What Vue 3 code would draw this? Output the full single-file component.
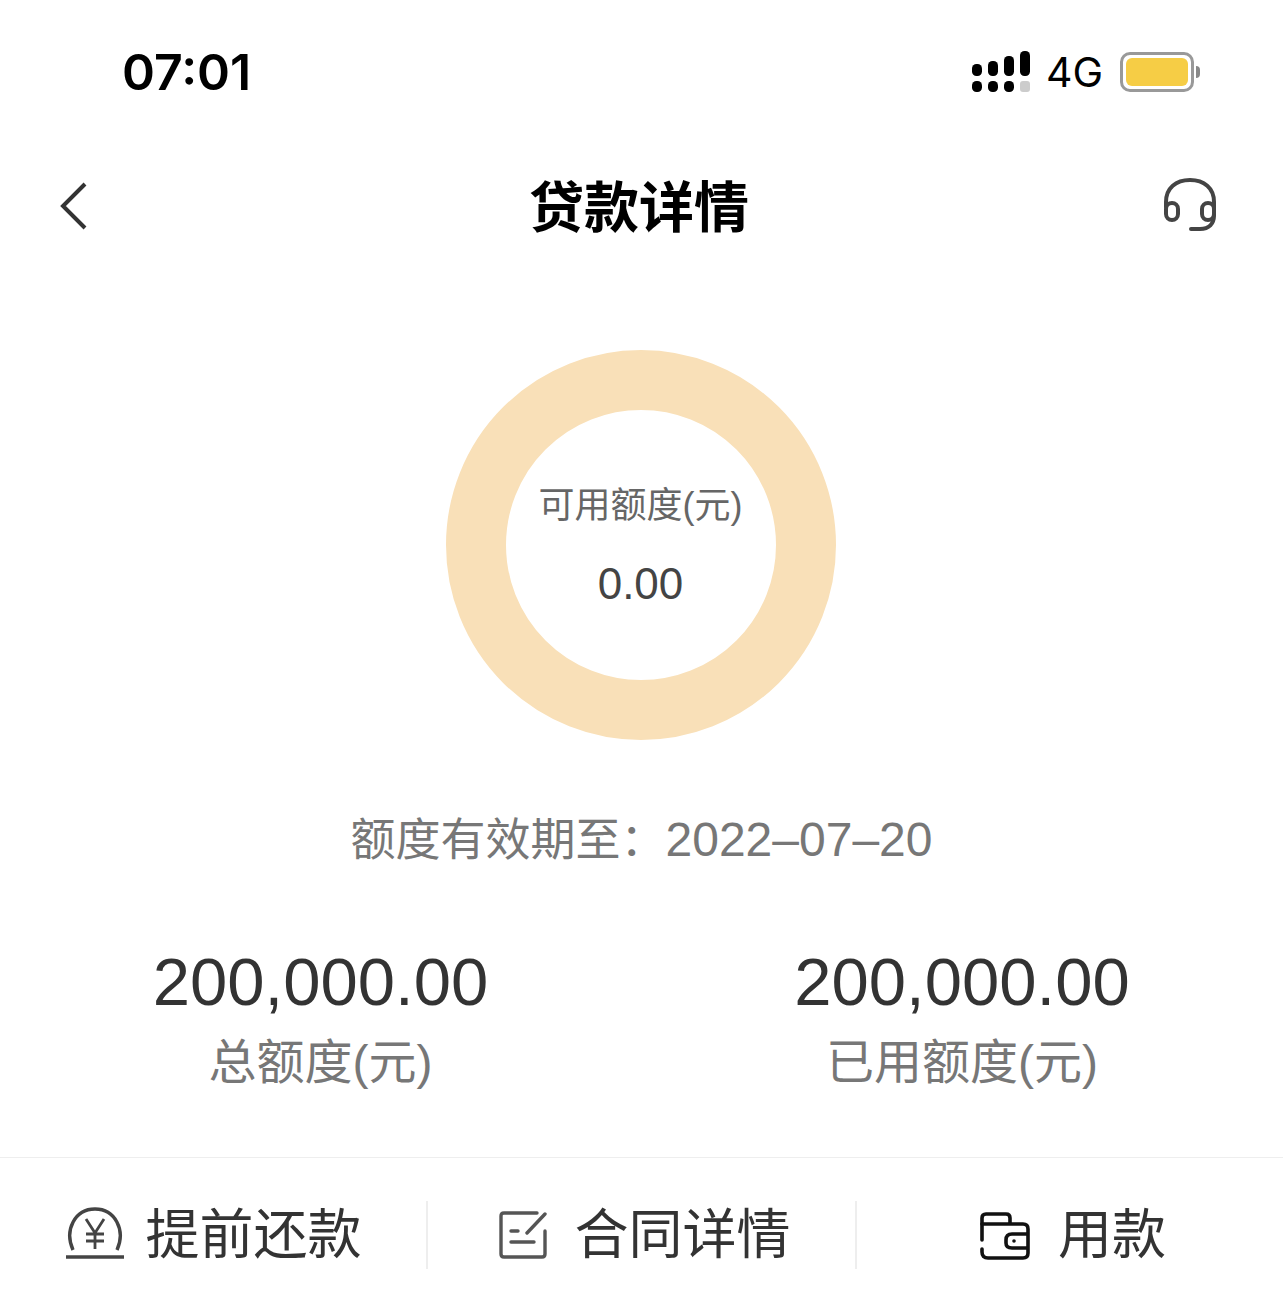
<script setup>
const stats = [
  { value: "200,000.00", label: "总额度(元)" },
  { value: "200,000.00", label: "已用额度(元)" },
];
</script>

<template>
  <div class="page">
    <div class="status-bar">
      <span class="time">07:01</span>
      <div class="status-right">
        <svg class="signal" width="60" height="42" viewBox="0 0 60 42">
          <rect x="0" y="13" width="10" height="12" rx="4.5" fill="#000" />
          <rect x="16" y="10" width="10" height="15" rx="4.5" fill="#000" />
          <rect x="32" y="5" width="10" height="20" rx="4.5" fill="#000" />
          <rect x="48" y="0" width="10" height="25" rx="4.5" fill="#000" />
          <rect x="0" y="30" width="10" height="11" rx="4.5" fill="#000" />
          <rect x="16" y="30" width="10" height="11" rx="4.5" fill="#000" />
          <rect x="32" y="30" width="10" height="11" rx="4.5" fill="#000" />
          <rect x="48" y="30" width="10" height="11" rx="3" fill="#ccc" />
        </svg>
        <span class="net">4G</span>
        <div class="battery"><div class="battery-fill"></div></div>
        <div class="battery-tip"></div>
      </div>
    </div>

    <div class="nav-bar">
      <svg class="nav-back" width="32" height="50" viewBox="0 0 32 50" fill="none" stroke="#333" stroke-width="4">
        <path d="M28 3 L6 25 L28 47" />
      </svg>
      <span class="title">贷款详情</span>
      <svg class="nav-help" width="56" height="56" viewBox="0 0 56 56" fill="none" stroke="#444" stroke-width="4" stroke-linecap="round">
        <path d="M4 30 V25 C4 11 14 3 28 3 C42 3 52 11 52 25 V38 C52 47 47 52 38 52 H29" />
        <rect x="4" y="26" width="12" height="17" rx="6" />
        <rect x="40" y="26" width="12" height="17" rx="6" />
      </svg>
    </div>

    <div class="ring-wrap">
      <div class="ring">
        <span class="ring-label">可用额度(元)</span>
        <span class="ring-value">0.00</span>
      </div>
    </div>

    <div class="expire">额度有效期至：<span class="expire-date">2022–07–20</span></div>

    <div class="stats">
      <div v-for="s in stats" :key="s.label" class="stat">
        <span class="stat-value">{{ s.value }}</span>
        <span class="stat-label">{{ s.label }}</span>
      </div>
    </div>

    <div class="actions">
      <div class="action first">
        <svg width="60" height="54" viewBox="0 0 60 54" fill="none" stroke="#444" stroke-width="3.4">
          <path d="M8 44 C-1 24 10 3 30 3 C50 3 61 24 52 44" />
          <path d="M1 51 H59" />
          <path d="M21 13 L30 27 L39 13 M30 27 V43 M21 28 H39 M21 35 H39" stroke-width="2.8" />
        </svg>
        <span>提前还款</span>
      </div>
      <div class="action second">
        <svg width="48" height="48" viewBox="0 0 48 48" fill="none" stroke="#555" stroke-width="3.4" stroke-linecap="round">
          <path d="M38 2 H5 Q2 2 2 5 V43 Q2 46 5 46 H43 Q46 46 46 43 V20" />
          <path d="M46 3 L28 22" />
          <path d="M12 20 H19 M12 31 H35" />
        </svg>
        <span>合同详情</span>
      </div>
      <div class="action third">
        <svg width="50" height="48" viewBox="0 0 50 48" fill="none" stroke="#111" stroke-width="3.6" stroke-linecap="round">
          <path d="M2 28 V6 Q2 2 6 2 H26 Q30 2 30 6 V11" />
          <path d="M2 12 H43 Q48 12 48 17 V41 Q48 46 43 46 H8 Q2 46 2 40 V37" />
          <path d="M47 22 H32 Q26 22 26 28 V31 Q26 36 32 36 H47" />
          <circle cx="34" cy="29" r="1.8" fill="#111" stroke="none" />
        </svg>
        <span>用款</span>
      </div>
    </div>
  </div>
</template>

<style>
body {
  background: #fff;
}
</style>

<style scoped>
.page {
  width: 1283px;
  height: 1303px;
  overflow: hidden;
  background: #fff;
  font-family: "Liberation Sans", "Noto Sans CJK SC", sans-serif;
  display: flex;
  flex-direction: column;
}

.status-bar {
  height: 143px;
  display: flex;
  justify-content: space-between;
  align-items: center;
  padding: 0 83px 0 122px;
}

.time {
  font-family: Inter, sans-serif;
  font-size: 50px;
  font-weight: 600;
  color: #000;
}

.status-right {
  display: flex;
  align-items: center;
}

.signal {
  margin-right: 14px;
}

.net {
  font-family: Inter, sans-serif;
  font-size: 41px;
  color: #000;
  margin-right: 17px;
}

.battery {
  width: 74px;
  height: 40px;
  border: 3px solid #999;
  border-radius: 10px;
  padding: 3px;
  box-sizing: border-box;
}

.battery-fill {
  height: 100%;
  background: #f6cd45;
  border-radius: 6px;
}

.battery-tip {
  width: 4px;
  height: 12px;
  margin-left: 2px;
  background: #888;
  border-radius: 0 4px 4px 0;
}

.nav-bar {
  height: 124px;
  display: grid;
  grid-template-columns: 1fr auto 1fr;
  align-items: center;
  padding: 0 65px 0 57px;
}

.nav-back {
  justify-self: start;
  margin-top: 2px;
}

.nav-help {
  justify-self: end;
}

.title {
  font-size: 55px;
  font-weight: 700;
  color: #000;
  line-height: 1;
  margin-left: 3px;
  margin-top: 6px;
}

.ring-wrap {
  display: flex;
  justify-content: center;
  padding: 83px 2px 0 0;
}

.ring {
  width: 390px;
  height: 390px;
  box-sizing: border-box;
  border: 60px solid #f9e0b8;
  border-radius: 50%;
  display: flex;
  flex-direction: column;
  align-items: center;
  justify-content: center;
}

.ring-label {
  font-size: 36px;
  color: #666;
  white-space: nowrap;
  margin-top: -5px;
}

.ring-value {
  font-size: 44px;
  color: #444;
  margin-top: 31px;
}

.expire {
  margin-top: 76px;
  text-align: center;
  font-size: 45px;
  line-height: 48px;
  color: #777;
}

.expire-date {
  font-size: 48px;
}

.stats {
  margin-top: 78px;
  display: grid;
  grid-template-columns: 641px 642px;
}

.stat {
  display: flex;
  flex-direction: column;
  align-items: center;
}

.stat-value {
  font-size: 67px;
  color: #333;
}

.stat-label {
  font-size: 48px;
  color: #777;
  margin-top: 3px;
}

.actions {
  margin-top: 64px;
  border-top: 1px solid #eee;
  height: 145px;
  display: grid;
  grid-template-columns: 428px 429px 426px;
  align-items: center;
}

.action {
  height: 68px;
  margin-top: 8px;
  display: flex;
  align-items: center;
  justify-content: center;
  gap: 21px;
  font-size: 54px;
  color: #333;
}

.action span {
  margin-top: -8px;
}

.first svg {
  margin-bottom: 4px;
}

.first,
.second {
  border-right: 2px solid #eee;
}

.second {
  gap: 28px;
  padding-left: 6px;
}

.third {
  gap: 28px;
  padding-left: 6px;
}

.third svg {
  margin-top: 2px;
}
</style>
